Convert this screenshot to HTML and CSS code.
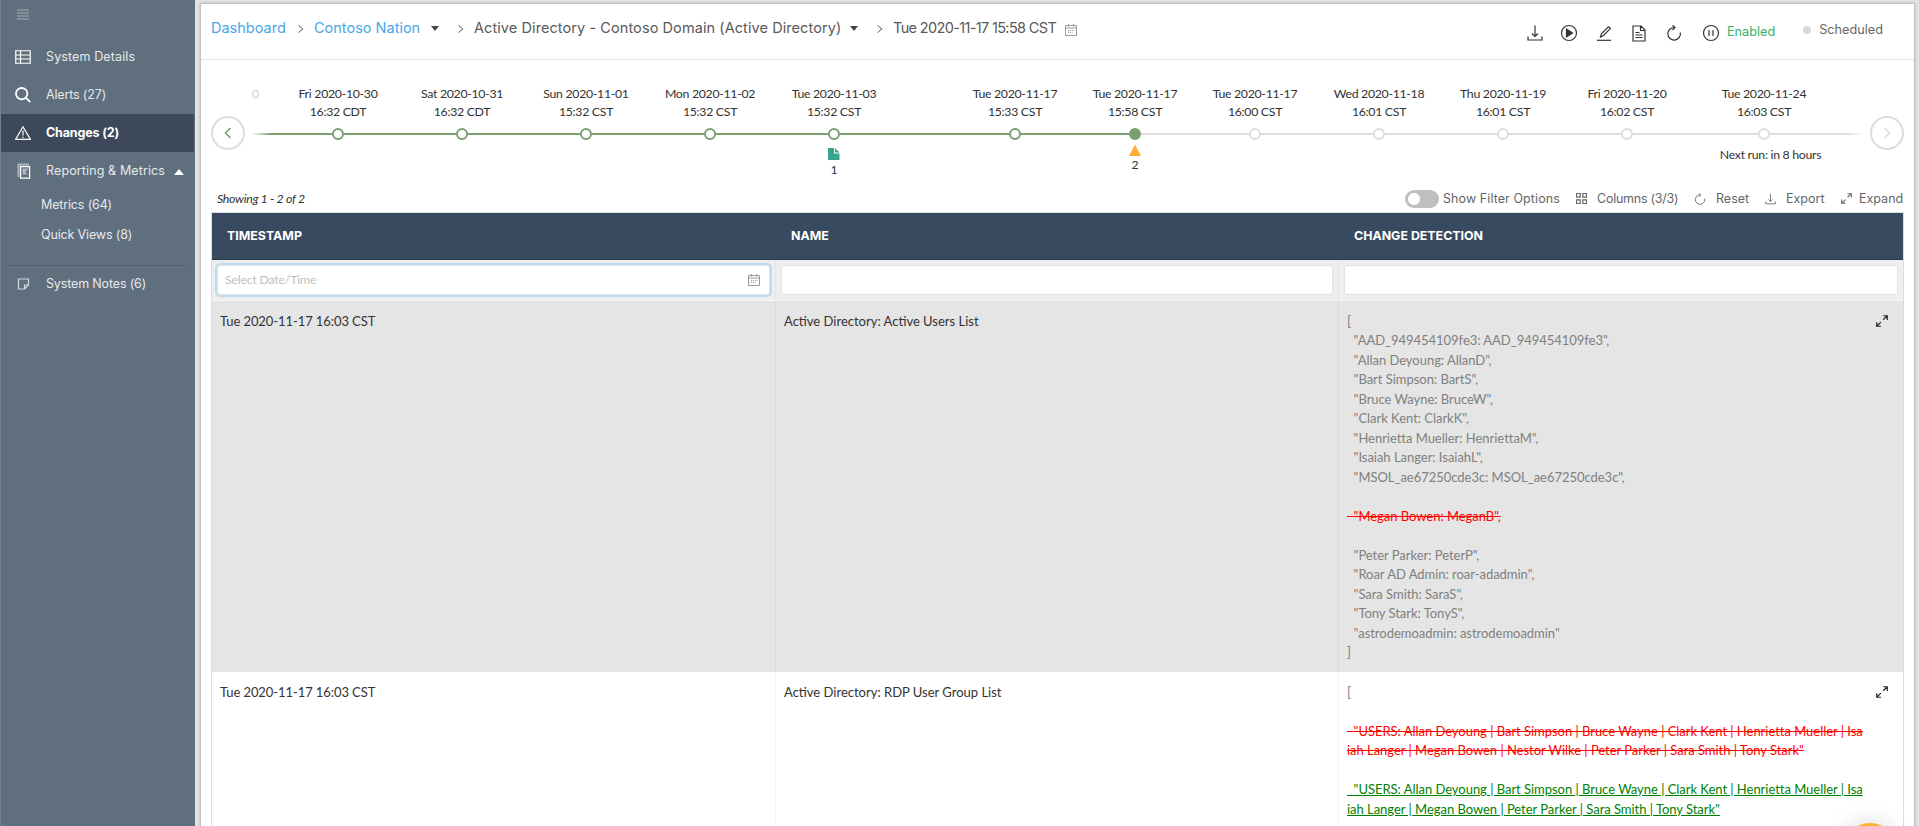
FILE: index.html
```html
<!DOCTYPE html>
<html lang="en">
<head>
    <meta charset="UTF-8">
    <title>Changes</title>
    <link rel="stylesheet" href="styles.css">
</head>
<body>
    <svg width="0" height="0" class="sprite">
        <symbol id="i-download" viewBox="0 0 16 16"><path d="M8 .5v11M5 8.500l3 3 3-3M1 11.500v3.500h14v-3.500"/></symbol>
        <symbol id="i-refresh" viewBox="0 0 16 16"><path d="M8.500 2.500A6.300 6.300 0 1 0 14.300 7.500M6.500.3l2.500 2.300-2.500 2.500"/></symbol>
        <symbol id="i-expand" viewBox="0 0 16 16"><path d="M9.500 6.500L15 1M9.500 1H15v5.500M6.500 9.500L1 15M1 9.500V15h5.500"/></symbol>
        <symbol id="i-calendar" viewBox="0 0 12 12"><path d="M.5 1.500h11v10H.5zM.5 4h11M3.500 0v2.500M8.500 0v2.500"/><path d="M3 6.500h6.500M3 8.500h4.500" stroke-dasharray="1 1"/></symbol>
    </svg>

    <div class="page">
        <nav class="sidebar">
            <div class="menu-toggle"><svg width="12" height="11" viewBox="0 0 12 11"><path d="M0 1h12M0 4h12M0 7h12M0 10h12"/></svg></div>
            <a class="nav-item">
                <svg width="16" height="14" viewBox="0 0 16 14"><path d="M.75.75h14.500v12.500H.75zM.75 5h14.500M.75 9h14.500M5.500.75v12.500"/></svg>
                <span class="wide">System Details</span>
            </a>
            <a class="nav-item">
                <svg width="16" height="16" viewBox="0 0 16 16" class="thick"><circle cx="6.700" cy="6.700" r="5.700"/><path d="M10.800 10.800L15.300 15"/></svg>
                <span>Alerts (27)</span>
            </a>
            <a class="nav-item active">
                <svg width="16" height="14" viewBox="0 0 16 14"><path d="M8 .8L15.400 13.400H.6zM8 4.500v5M8 10.700v1.300"/></svg>
                <span>Changes (2)</span>
            </a>
            <a class="nav-item">
                <svg width="16" height="16" viewBox="0 0 16 16"><path class="dim" d="M3.500 14V1.500H14" stroke-width="2"/><path d="M5.600 3.600h9v11.500h-9z"/><path class="dim-fill" d="M7.500 5.500h5.500v2h-2v3h2v1H7.500z"/></svg>
                <span class="wide">Reporting &amp; Metrics</span>
                <i class="caret-up"></i>
            </a>
            <a class="nav-sub">Metrics (64)</a>
            <a class="nav-sub">Quick Views (8)</a>
            <hr>
            <a class="nav-item notes">
                <svg width="16" height="12" viewBox="0 0 16 12"><path d="M3.500 1h10v6l-4 4h-6zM9.500 11V7h4"/></svg>
                <span>System Notes (6)</span>
            </a>
        </nav>

        <main class="panel">
            <header class="topbar">
                <div class="breadcrumb">
                    <a class="crumb-1">Dashboard</a>
                    <svg class="sep" width="6" height="8" viewBox="0 0 6 8"><path d="M.5.5L5 4 .5 7.500"/></svg>
                    <a class="crumb-2">Contoso Nation</a>
                    <i class="caret-down"></i>
                    <svg class="sep" width="6" height="8" viewBox="0 0 6 8"><path d="M.5.5L5 4 .5 7.500"/></svg>
                    <span class="crumb-3">Active Directory - Contoso Domain (Active Directory)</span>
                    <i class="caret-down"></i>
                    <svg class="sep" width="6" height="8" viewBox="0 0 6 8"><path d="M.5.5L5 4 .5 7.500"/></svg>
                    <span class="crumb-4">Tue 2020-11-17 15:58 CST</span>
                    <svg class="cal" width="12" height="12"><use href="#i-calendar"/></svg>
                </div>
                <div class="actions">
                    <svg class="a-download" width="16" height="16"><use href="#i-download"/></svg>
                    <svg class="a-run" width="18" height="18" viewBox="0 0 18 18"><circle cx="9" cy="9" r="7.500"/><path class="solid" d="M6.500 5v8l6-4z"/></svg>
                    <svg class="a-edit" width="16" height="16" viewBox="0 0 16 16"><path d="M1 15.300h14"/><path d="M4.500 12l1-3.500L12.500 1.800l2 1.500L7.500 10.500z"/></svg>
                    <svg class="a-report" width="16" height="17" viewBox="0 0 16 17"><path d="M2 1h8l4 4v11H2zM9.500 1v4.500H14M4.500 7.500h4M4.500 10h7M4.500 12.500h7"/></svg>
                    <svg class="a-refresh" width="16" height="18"><use href="#i-refresh"/></svg>
                    <svg class="a-pause" width="18" height="18" viewBox="0 0 18 18"><circle cx="9" cy="9" r="7.500"/><path d="M7 6v6M11 6v6"/></svg>
                    <span class="enabled">Enabled</span>
                    <i class="dot"></i>
                    <span class="scheduled">Scheduled</span>
                </div>
            </header>

            <section class="timeline">
                <button class="round"><svg width="8" height="12" viewBox="0 0 8 12"><path d="M6.500 1L1.500 6l5 5"/></svg></button>
                <div class="track">
                    <span class="ghost">0</span>
                    <div class="stop"><span>Fri 2020-10-30</span><span>16:32 CDT</span><i></i></div>
                    <div class="stop day"><span>Sat 2020-10-31</span><span>16:32 CDT</span><i></i></div>
                    <div class="stop day"><span>Sun 2020-11-01</span><span>15:32 CST</span><i></i></div>
                    <div class="stop day"><span>Mon 2020-11-02</span><span>15:32 CST</span><i></i></div>
                    <div class="stop day"><span>Tue 2020-11-03</span><span>15:32 CST</span><i></i>
                        <svg class="note" width="12" height="12" viewBox="0 0 12 12"><path d="M0 0h6v5.500h5.500V12H0zM7 0l4.500 4.500H7z"/></svg>1</div>
                    <div class="stop weeks"><span>Tue 2020-11-17</span><span>15:33 CST</span><i></i></div>
                    <div class="stop current"><span>Tue 2020-11-17</span><span>15:58 CST</span><i></i>
                        <svg class="warn" width="12" height="12" viewBox="0 0 12 12"><path d="M6 .5L12 12H0z"/></svg>2</div>
                    <div class="stop later"><span>Tue 2020-11-17</span><span>16:00 CST</span><i></i></div>
                    <div class="stop later day"><span>Wed 2020-11-18</span><span>16:01 CST</span><i></i></div>
                    <div class="stop later day"><span>Thu 2020-11-19</span><span>16:01 CST</span><i></i></div>
                    <div class="stop later day"><span>Fri 2020-11-20</span><span>16:02 CST</span><i></i></div>
                    <div class="stop later days"><span>Tue 2020-11-24</span><span>16:03 CST</span><i></i><span class="next">Next run: in 8 hours</span></div>
                </div>
                <button class="round off"><svg width="8" height="12" viewBox="0 0 8 12"><path d="M1.500 1l5 5-5 5"/></svg></button>
            </section>

            <div class="tools">
                <em>Showing 1 - 2 of 2</em>
                <i class="toggle"></i>
                <span class="t-filter">Show Filter Options</span>
                <svg width="11" height="11" viewBox="0 0 11 11"><path d="M.5.5h3.700v3.700H.5zM6.800.5h3.700v3.700H6.800zM.5 6.800h3.700v3.700H.5zM6.800 6.800h3.700v3.700H6.800z"/></svg>
                <span class="t-columns">Columns (3/3)</span>
                <svg width="12" height="12"><use href="#i-refresh"/></svg>
                <span class="t-reset">Reset</span>
                <svg width="11" height="12"><use href="#i-download"/></svg>
                <span class="t-export">Export</span>
                <svg class="t-arrows" width="11" height="11"><use href="#i-expand"/></svg>
                <span>Expand</span>
            </div>

            <div class="grid">
                <div class="row head"><div>TIMESTAMP</div><div>NAME</div><div>CHANGE DETECTION</div></div>
                <div class="row filters">
                    <div><label class="field focus">Select Date/Time<svg class="cal" width="12" height="12"><use href="#i-calendar"/></svg></label></div>
                    <div><label class="field"></label></div>
                    <div><label class="field"></label></div>
                </div>
                <div class="row shaded">
                    <div class="stamp">Tue 2020-11-17 16:03 CST</div>
                    <div>Active Directory: Active Users List</div>
                    <div class="change">
<pre>[
  "AAD_949454109fe3: AAD_949454109fe3",
  "Allan Deyoung: AllanD",
  "Bart Simpson: BartS",
  "Bruce Wayne: BruceW",
  "Clark Kent: ClarkK",
  "Henrietta Mueller: HenriettaM",
  "Isaiah Langer: IsaiahL",
  "MSOL_ae67250cde3c: MSOL_ae67250cde3c",

<del>  "Megan Bowen: MeganB",</del>

  "Peter Parker: PeterP",
  "Roar AD Admin: roar-adadmin",
  "Sara Smith: SaraS",
  "Tony Stark: TonyS",
  "astrodemoadmin: astrodemoadmin"
]</pre>
                        <svg width="12" height="12"><use href="#i-expand"/></svg>
                    </div>
                </div>
                <div class="row">
                    <div class="stamp">Tue 2020-11-17 16:03 CST</div>
                    <div>Active Directory: RDP User Group List</div>
                    <div class="change">
<pre>[

<del>  "USERS: Allan Deyoung | Bart Simpson | Bruce Wayne | Clark Kent | Henrietta Mueller | Isaiah Langer | Megan Bowen | Nestor Wilke | Peter Parker | Sara Smith | Tony Stark"</del>

<ins>  "USERS: Allan Deyoung | Bart Simpson | Bruce Wayne | Clark Kent | Henrietta Mueller | Isaiah Langer | Megan Bowen | Peter Parker | Sara Smith | Tony Stark"</ins></pre>
                        <svg width="12" height="12"><use href="#i-expand"/></svg>
                    </div>
                </div>
            </div>
        </main>
        <div class="chat"></div>
    </div>
</body>
</html>
```
FILE: styles.css
```css
* {
    box-sizing: border-box;
}
body {
    margin: 0;
    height: 826px;
    overflow: hidden;
    background: #e3e3e3;
    color: #333;
    font: 13px/18px Lato, sans-serif;
}
svg {
    fill: none;
    stroke: currentColor;
    flex: none;
}
.sprite {
    position: absolute;
}
.page {
    position: relative;
    display: flex;
    height: 826px;
    overflow: hidden;
}

/* sidebar */
.sidebar {
    width: 195px;
    flex: none;
    background: #5f6f7e;
    border-left: 1px solid #71808e;
    color: #e6e9ec;
    font-family: Inter, sans-serif;
    font-size: 12.500px;
    letter-spacing: -0.150px;
}
.menu-toggle {
    height: 38px;
    padding: 9px 0 0 16px;
    line-height: 0;
    color: #aab3bb;
}
.nav-item {
    display: flex;
    align-items: center;
    height: 38px;
    padding-left: 14px;
    gap: 15px;
}
.nav-item svg {
    color: #fff;
    stroke-width: 1.2;
}
.nav-item .thick {
    stroke-width: 1.8;
}
.nav-item .dim {
    stroke: #adb6be;
}
.nav-item .dim-fill {
    fill: #adb6be;
    stroke: none;
}
.nav-item .wide {
    letter-spacing: 0.120px;
}
.nav-item.active {
    background: #3d495a;
    color: #fff;
    font-weight: 700;
    margin-right: 1px;
}
.nav-item.notes {
    height: 36px;
}
.nav-item.notes svg {
    color: #d5dade;
}
.nav-sub {
    display: block;
    height: 30px;
    padding-left: 40px;
    line-height: 30px;
}
.sidebar hr {
    margin: 15px 9px 0 5px;
    border: 0;
    border-top: 1px solid #4f5f6e;
}
.caret-up {
    border: 5px solid transparent;
    border-top: 0;
    border-bottom: 6px solid #fff;
    margin: 2px 0 0 -6px;
}

/* panel */
.panel {
    flex: none;
    width: 1715px;
    height: 840px;
    margin: 3px 0 0 5px;
    background: #fff;
    border: 1px solid #c4c4c4;
    box-shadow: 0 0 3px rgba(0,0,0,0.2);
}
.topbar {
    display: flex;
    justify-content: space-between;
    height: 56px;
    padding: 0 31px 0 10px;
    border-bottom: 1px solid #e2e2e2;
    color: #595959;
    font-family: Inter, sans-serif;
}
.breadcrumb {
    display: flex;
    align-items: center;
    height: 48px;
    font-size: 14.500px;
    white-space: nowrap;
}
.breadcrumb a {
    color: #4ba6e8;
}
.crumb-1 {
    width: 87px;
}
.crumb-2 {
    width: 117px;
}
.crumb-3 {
    width: 376px;
    letter-spacing: 0.080px;
}
.crumb-4 {
    width: 172px;
    letter-spacing: -0.650px;
}
.sep {
    margin: 2px 10px 0 0;
}
.caret-down {
    border: 4px solid transparent;
    border-bottom: 0;
    border-top: 5px solid #444;
    margin-right: 19px;
}
.cal {
    color: #999;
}
.breadcrumb .cal {
    margin-top: 3px;
}
.actions {
    display: flex;
    align-items: center;
    height: 58px;
    color: #333;
    font-size: 12.700px;
}
.actions svg {
    stroke-width: 1.2;
}
.a-download {
    margin-right: 17px;
}
.a-run {
    margin-right: 18px;
}
.a-edit {
    margin-right: 19px;
}
.a-report {
    margin-right: 19px;
}
.a-refresh {
    margin-right: 20px;
}
.a-pause {
    margin-right: 7px;
}
.solid {
    fill: #333;
}
.enabled {
    color: #34b268;
    padding-bottom: 3px;
}
.dot {
    width: 8px;
    height: 8px;
    border-radius: 50%;
    background: #d8d8d8;
    margin: 0 8px 6px 28px;
}
.scheduled {
    color: #666;
    padding-bottom: 7px;
}

/* timeline */
.timeline {
    display: flex;
    height: 126px;
    padding: 24px 10px 0 10px;
    color: #333;
    font-size: 12.300px;
    letter-spacing: -0.300px;
}
.round {
    flex: none;
    width: 34px;
    height: 34px;
    margin-top: 32px;
    padding: 0;
    border: 2px solid #ddd;
    border-radius: 50%;
    background: #fff;
    color: #7c9f70;
    line-height: 0;
}
.round svg {
    stroke-width: 1.6;
}
.round.off {
    color: #ddd;
}
.track {
    display: flex;
    width: 1625px;
    padding: 1px 0 0 7px;
    background: linear-gradient(90deg, #fff 7px, rgba(255,255,255,0) 26px, rgba(255,255,255,0) 1600px, #fff 1618px) 0 49px / 100% 2px no-repeat,
        linear-gradient(90deg, #7c9f70 889px, #ddd 889px) 0 49px / 100% 2px no-repeat;
}
.ghost {
    width: 26px;
    color: #ccc;
}
.stop {
    display: flex;
    flex: none;
    flex-direction: column;
    align-items: center;
    width: 120px;
}
.stop i {
    width: 12px;
    height: 12px;
    margin: 7px 0 8px;
    border: 2px solid #7c9f70;
    border-radius: 50%;
    background: #fff;
}
.stop.day {
    margin-left: 4px;
}
.stop.days {
    margin-left: 17px;
}
.stop.weeks {
    margin-left: 61px;
}
.stop.current i {
    background: #7c9f70;
    margin-bottom: 4px;
}
.stop.later i {
    border-color: #ddd;
    margin-bottom: 6px;
}
.note {
    fill: #35a590;
    stroke: none;
    margin-bottom: 1px;
}
.warn {
    fill: #ffad33;
    stroke: none;
}
.next {
    margin-left: 13px;
    white-space: nowrap;
}

/* table tools */
.tools {
    display: flex;
    align-items: center;
    height: 26px;
    padding: 0 0 1px 16px;
    color: #666;
    font-family: Inter, sans-serif;
    font-size: 12.500px;
    white-space: nowrap;
}
.tools em {
    width: 1188px;
    color: #333;
    font-family: Lato, sans-serif;
    font-size: 12.300px;
    letter-spacing: -0.300px;
}
.tools svg {
    margin-right: 10px;
    stroke-width: 1.2;
}
.toggle {
    width: 34px;
    height: 18px;
    margin-right: 4px;
    border-radius: 9px;
    background: radial-gradient(circle at 9px 9px, #fff 5.500px, #bfbfbf 6.500px);
}
.t-filter {
    width: 133px;
    letter-spacing: 0.080px;
}
.t-columns {
    width: 97px;
    letter-spacing: -0.250px;
}
.t-reset {
    width: 49px;
}
.t-export {
    width: 55px;
}
.tools .t-arrows {
    margin-right: 7px;
    stroke-width: 1.6;
}

/* grid */
.grid {
    width: 1693px;
    margin-left: 10px;
    border: 1px solid #ddd;
}
.row {
    display: grid;
    grid-template-columns: 563px 563px 565px;
    line-height: 19.500px;
}
.row > div {
    padding: 10.500px 8px 9px;
    border-left: 1px solid rgba(0,0,0,0.04);
}
.row > div:first-child {
    border-left: 0;
}
.row .stamp {
    letter-spacing: -0.080px;
}
.row.head {
    height: 47px;
    background: #384a5f;
    border-bottom: 1px solid #2b3c50;
    color: #fff;
    font: 700 12.400px/20px Inter, sans-serif;
}
.row.head > div {
    padding: 13px 16px;
    border: 0;
}
.row.head > div:first-child {
    padding-left: 15px;
}
.row.filters {
    height: 41px;
    background: #eee;
    border-bottom: 1px solid #f6f6f6;
}
.row.filters > div {
    padding: 5px;
}
.field {
    display: flex;
    align-items: center;
    justify-content: space-between;
    height: 30px;
    padding: 0 9px 0 7px;
    border: 1px solid #e2e2e2;
    border-radius: 3px;
    background: #fff;
    color: #c0c0c0;
    font-size: 12.300px;
    letter-spacing: -0.200px;
}
.field.focus {
    box-shadow: 0 0 0 2px #bfdcec;
}
.row.shaded {
    height: 371px;
    background: #e5e5e5;
}
.change {
    display: flex;
    justify-content: space-between;
    color: #808080;
}
.change pre {
    width: 517px;
    margin: 0;
    font: inherit;
    letter-spacing: -0.030px;
    white-space: pre-wrap;
    word-break: break-all;
}
.change svg {
    margin: 3px 7px 0 0;
    color: #222;
    stroke-width: 1.6;
}
.change del {
    color: #f00;
}
.change ins {
    color: #008000;
}
.chat {
    position: absolute;
    left: 1842px;
    top: 823px;
    width: 56px;
    height: 56px;
    border-radius: 50%;
    background: #f9b233;
    box-shadow: 0 0 24px rgba(0,0,0,0.15);
}
```
